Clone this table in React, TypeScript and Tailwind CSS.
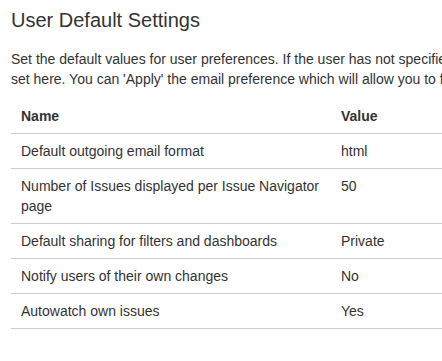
const rows: [string, string][] = [
  ["Default outgoing email format", "html"],
  ["Number of Issues displayed per Issue Navigator page", "50"],
  ["Default sharing for filters and dashboards", "Private"],
  ["Notify users of their own changes", "No"],
  ["Autowatch own issues", "Yes"],
];

export default function App() {
  return (
    <div className="w-[442px] h-[361px] overflow-hidden bg-white font-['Liberation_Sans',Arial,sans-serif] text-[#333]">
      <div className="w-[900px] pl-[11px] pt-[8px]">
        <h1 className="text-[20px] leading-[24px] font-normal">User Default Settings</h1>
        <p className="mt-[17px] text-[14px] leading-[20px] whitespace-nowrap">
          Set the default values for user preferences. If the user has not specified a preference, the value will be
          <br />
          set here. You can 'Apply' the email preference which will allow you to force this preference onto all users.
        </p>
        <table className="mt-[10px] w-[720px] border-collapse text-[14px] leading-[20px]">
          <thead>
            <tr className="border-b border-[#ccc]">
              <th className="w-[320px] px-[10px] py-[7px] text-left font-bold">Name</th>
              <th className="px-[10px] py-[7px] text-left font-bold">Value</th>
            </tr>
          </thead>
          <tbody>
            {rows.map(([name, value]) => (
              <tr key={name} className="border-b border-[#ccc]">
                <td className="w-[320px] px-[10px] py-[7px] align-top">{name}</td>
                <td className="px-[10px] py-[7px] align-top">{value}</td>
              </tr>
            ))}
          </tbody>
        </table>
      </div>
    </div>
  );
}
